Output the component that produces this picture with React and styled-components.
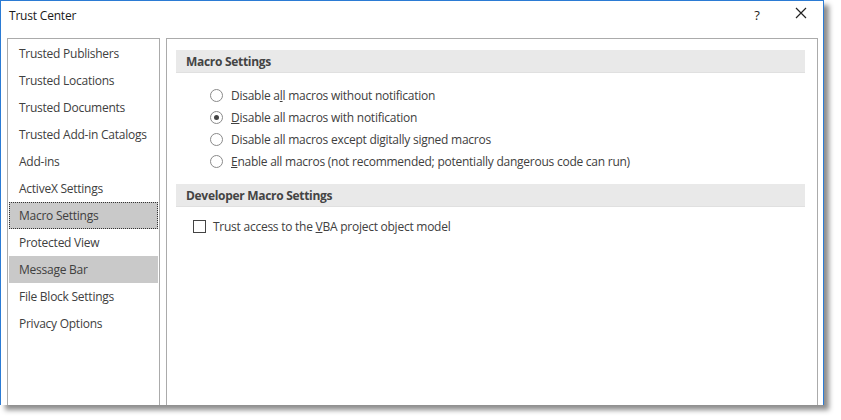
import React from 'react';
import styled, { createGlobalStyle } from 'styled-components';

const GlobalStyle = createGlobalStyle`
  html, body {
    margin: 0;
    padding: 0;
    background: #ffffff;
  }
  body {
    font-family: "Open Sans", "Noto Sans", "Liberation Sans", sans-serif;
    font-size: 12px;
  }
`

const Page = styled.div`
  width: 841px;
  height: 420px;
  overflow: hidden;
  background: #ffffff;
`
const Window = styled.div`
  width: 824px;
  height: 405px;
  box-sizing: border-box;
  border: 1px solid #2b7bd4;
  border-bottom: none;
  background: #ffffff;
  box-shadow: 5px 5px 5px rgba(0,0,0,0.45);
  display: flex;
  flex-direction: column;
`
const TitleBar = styled.div`
  height: 37px;
  display: flex;
  align-items: flex-start;
  padding: 6px 0 0 8px;
  box-sizing: border-box;
`
const Title = styled.div`
  flex: 1;
  color: #1a1a1a;
  font-size: 12px;
  letter-spacing: -0.2px;
`
const TitleButton = styled.div`
  width: 44px;
  display: flex;
  justify-content: center;
  color: #222;
  font-size: 13px;
  line-height: 17px;
`
const Body = styled.div`
  flex: 1;
  display: flex;
  gap: 6px;
  padding: 0 5px 0 6px;
`
const Nav = styled.div`
  width: 153px;
  box-sizing: border-box;
  border: 1px solid #ababab;
  border-bottom: none;
  padding: 1px 1px 0 1px;
`
const NavItem = styled.div`
  height: 27px;
  box-sizing: border-box;
  display: flex;
  align-items: center;
  padding-left: 9px;
  color: #404040;
  letter-spacing: -0.25px;
  background: ${p => (p.$selected || p.$hover) ? '#c9c9c9' : 'transparent'};
  border: 1px ${p => p.$selected ? 'dotted #333' : 'solid transparent'};
`
const Content = styled.div`
  flex: 1;
  box-sizing: border-box;
  border: 1px solid #ababab;
  border-bottom: none;
  padding: 11px 12px 0 9px;
`
const SectionHeader = styled.div`
  height: 23px;
  background: #e9e9e9;
  border-bottom: 1px solid #e0e0e0;
  box-sizing: border-box;
  display: flex;
  align-items: center;
  padding-left: 10px;
  font-weight: 700;
  color: #444;
  letter-spacing: -0.3px;
`
const RadioList = styled.div`
  display: flex;
  flex-direction: column;
  padding: 11px 0 12px 34px;
`
const OptionRow = styled.label`
  height: 22px;
  display: flex;
  align-items: center;
  gap: 8px;
  color: #404040;
  letter-spacing: -0.25px;
`
const Radio = styled.span`
  width: 11px;
  height: 11px;
  border-radius: 50%;
  border: 1px solid #8a8a8a;
  background: #fff;
  display: flex;
  align-items: center;
  justify-content: center;
  flex: none;
  &::after {
    content: '';
    width: 5px;
    height: 5px;
    border-radius: 50%;
    background: ${p => p.$checked ? '#444' : 'transparent'};
  }
`
const CheckRow = styled(OptionRow)`
  padding: 8px 0 0 17px;
  gap: 7px;
`
const Checkbox = styled.span`
  width: 11px;
  height: 11px;
  border: 1px solid #444;
  background: #fff;
  flex: none;
`
const Key = styled.span`
  text-decoration: underline;
`

const navItems = [
  'Trusted Publishers',
  'Trusted Locations',
  'Trusted Documents',
  'Trusted Add-in Catalogs',
  'Add-ins',
  'ActiveX Settings',
  'Macro Settings',
  'Protected View',
  'Message Bar',
  'File Block Settings',
  'Privacy Options',
];

export default function App() {
  return (
    <Page>
      <GlobalStyle />
      <Window>
        <TitleBar>
          <Title>Trust Center</Title>
          <TitleButton>?</TitleButton>
          <TitleButton>
            <svg width="12" height="12" viewBox="0 0 12 12">
              <path d="M1 1 L11 11 M11 1 L1 11" stroke="#222" strokeWidth="1.2" fill="none" />
            </svg>
          </TitleButton>
        </TitleBar>
        <Body>
          <Nav>
            {navItems.map((item) => (
              <NavItem
                key={item}
                $selected={item === 'Macro Settings'}
                $hover={item === 'Message Bar'}
              >
                {item}
              </NavItem>
            ))}
          </Nav>
          <Content>
            <SectionHeader>Macro Settings</SectionHeader>
            <RadioList>
              <OptionRow><Radio /><span>Disable a<Key>l</Key>l macros without notification</span></OptionRow>
              <OptionRow><Radio $checked /><span><Key>D</Key>isable all macros with notification</span></OptionRow>
              <OptionRow><Radio /><span>Disable all macros except di<Key>g</Key>itally signed macros</span></OptionRow>
              <OptionRow><Radio /><span><Key>E</Key>nable all macros (not recommended; potentially dangerous code can run)</span></OptionRow>
            </RadioList>
            <SectionHeader>Developer Macro Settings</SectionHeader>
            <CheckRow><Checkbox /><span>Trust access to the <Key>V</Key>BA project object model</span></CheckRow>
          </Content>
        </Body>
      </Window>
    </Page>
  );
}
